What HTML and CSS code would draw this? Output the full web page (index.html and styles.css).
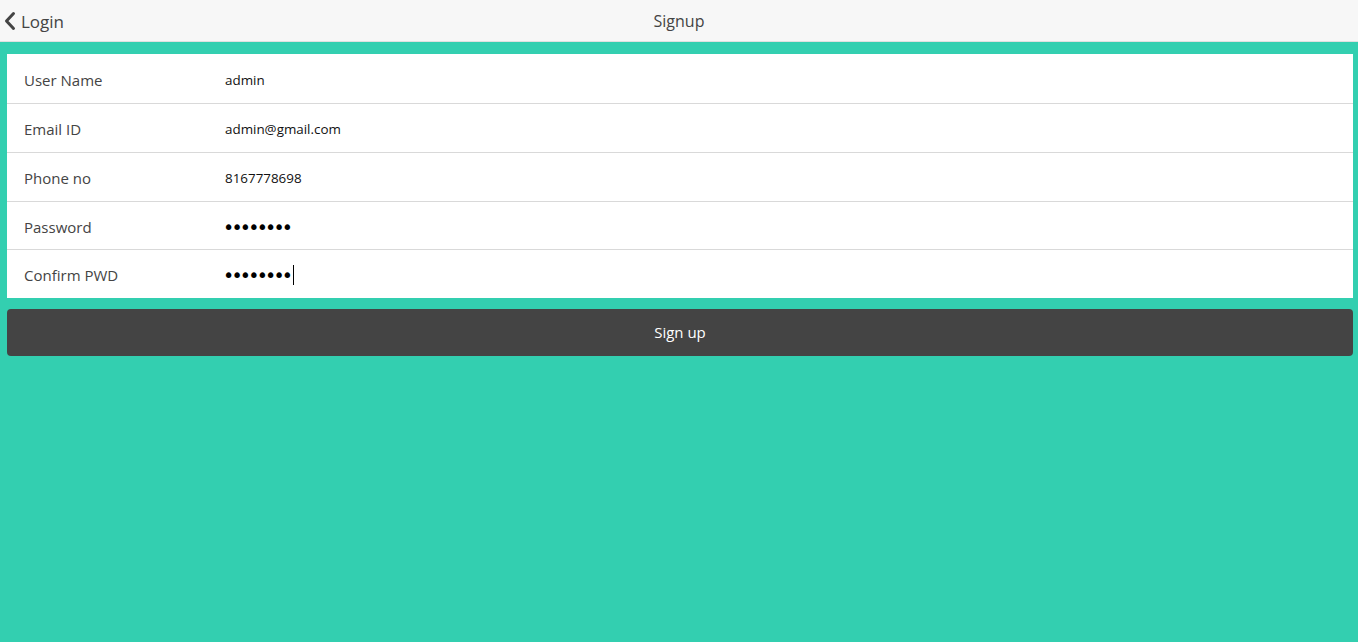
FILE: index.html
```html
<!DOCTYPE html>
<html>
<head>
<meta charset="utf-8">
<link rel="stylesheet" href="styles.css">
</head>
<body>
<header class="bar">
  <a class="back">
    <svg class="chev" width="13" height="20" viewBox="0 0 13 20"><path d="M10.5 2.5 L3.5 10 L10.5 17.5" fill="none" stroke="#444" stroke-width="3" stroke-linecap="round" stroke-linejoin="round"/></svg>
    <span>Login</span>
  </a>
  <div class="title">Signup</div>
</header>
<main class="content">
  <div class="list">
    <div class="row"><span class="lbl">User Name</span><span class="val">admin</span></div>
    <div class="row"><span class="lbl">Email ID</span><span class="val">admin@gmail.com</span></div>
    <div class="row"><span class="lbl">Phone no</span><span class="val">8167778698</span></div>
    <div class="row"><span class="lbl">Password</span><span class="val dots">••••••••</span></div>
    <div class="row"><span class="lbl">Confirm PWD</span><span class="val dots">••••••••<i class="caret"></i></span></div>
  </div>
  <button class="btn">Sign up</button>
</main>
</body>
</html>
```
FILE: styles.css
```css
html, body { margin: 0; padding: 0; }
body {
  background: #33cfb0;
  font-family: "Open Sans", "Noto Sans", sans-serif;
  color: #444;
  height: 642px;
  overflow: hidden;
}
.bar {
  height: 42px;
  background: #f7f7f7;
  border-bottom: 1px solid #e0e0e0;
  position: relative;
  display: flex;
  align-items: center;
  justify-content: center;
  box-sizing: border-box;
}
.back {
  position: absolute;
  left: 3px;
  top: 0;
  height: 42px;
  display: flex;
  align-items: center;
  gap: 5px;
  font-size: 17px;
  color: #444;
}
.chev { display: block; margin-top: -1px; }
.title { font-size: 16px; color: #444; margin-top: 1px; }
.content { padding: 12px 5px 0 7px; }
.list { background: #fff; }
.row {
  height: 49px;
  display: flex;
  align-items: center;
  border-top: 1px solid #d9d9d9;
  box-sizing: border-box;
  padding-top: 2px;
}
.row:first-child { border-top: none; padding-top: 3px; }
.row:nth-child(4) { height: 48px; }
.lbl {
  width: 218px;
  padding-left: 17px;
  font-size: 15px;
  color: #444;
  box-sizing: border-box;
}
.val { font-size: 13.4px; color: #111; }
.dots {
  font-family: "DejaVu Sans", sans-serif;
  font-size: 19px;
  line-height: 20px;
  color: #000;
  letter-spacing: -2.8px;
  display: flex;
  align-items: center;
  margin-left: -2px;
}
.caret {
  display: inline-block;
  width: 1px;
  height: 20px;
  background: #000;
  margin-left: 3px;
}
.btn {
  display: block;
  width: 100%;
  margin-top: 11px;
  height: 47px;
  border: none;
  border-radius: 4px;
  background: #444;
  color: #fff;
  font-family: "Open Sans", "Noto Sans", sans-serif;
  font-size: 15px;
  padding: 0 0 2px;
}
```
